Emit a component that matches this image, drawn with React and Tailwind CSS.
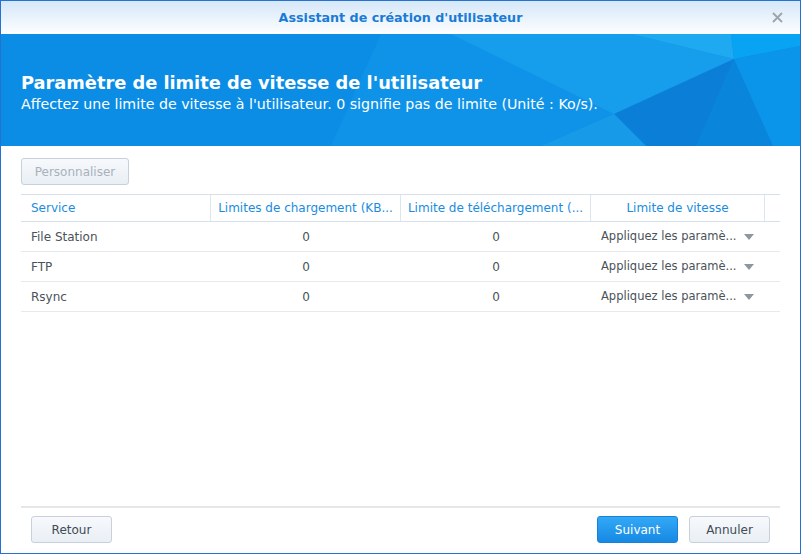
// dialog colours
// border  #2473d0
// banner  #0b8de6
// header  #1a8ce0

const rows = [
  { name: "File Station", up: 0, down: 0 },
  { name: "FTP", up: 0, down: 0 },
  { name: "Rsync", up: 0, down: 0 },
];

function Facets() {
  return (
    <svg
      className="absolute inset-0 h-full w-full"
      viewBox="0 0 799 112"
      preserveAspectRatio="none"
    >
      <polygon points="380,0 630,0 733,25 613,80 540,112 330,112" fill="#0f93e8" />
      <polygon points="450,0 630,0 733,25 613,80" fill="#169deb" />
      <polygon points="630,0 730,0 733,25" fill="#1ea9f0" />
      <polygon points="730,0 799,0 799,12 733,25" fill="#09a3f3" />
      <polygon points="733,25 799,12 799,112 772,112" fill="#0b95ea" />
      <polygon points="733,25 772,112 695,112" fill="#0a85dc" />
      <polygon points="733,25 695,112 645,112 613,80" fill="#0b7fd8" />
      <polygon points="613,80 645,112 540,112" fill="#179be9" />
    </svg>
  );
}

function Button({ children, primary, disabled, className = "" }) {
  const base = primary
    ? "bg-gradient-to-b from-[#33a8f6] to-[#1589e4] border-[#1a82d6] text-white"
    : "bg-gradient-to-b from-[#f7f9fc] to-[#e9eff5] border-[#c6d1dc]";
  const text = primary ? "" : disabled ? "text-[#a9b2bb]" : "text-[#414b55]";
  return (
    <button
      className={`h-[27px] rounded-[3px] border text-[12px] ${base} ${text} ${className}`}
    >
      {children}
    </button>
  );
}

function App() {
  return (
    <div
      className="flex h-[554px] w-[801px] flex-col overflow-hidden border border-[#2473d0] bg-white"
      style={{ fontFamily: '"DejaVu Sans", Verdana, sans-serif' }}
    >
      {/* title bar */}
      <div className="relative flex h-[33px] shrink-0 items-center justify-center bg-gradient-to-b from-[#d5e7f8] to-[#fdfeff]">
        <span className="text-[12.7px] font-bold text-[#1a7bd6]">
          Assistant de création d'utilisateur
        </span>
        <svg
          className="absolute right-[17px] top-[11px]"
          width="11"
          height="11"
          viewBox="0 0 11 11"
        >
          <path d="M1 1 L10 10 M10 1 L1 10" stroke="#9ea4aa" strokeWidth="1.8" />
        </svg>
      </div>

      {/* banner */}
      <div className="relative h-[112px] shrink-0 bg-[#0b8de6]">
        <Facets />
        <div className="relative px-5 pt-[37px] text-white">
          <div className="text-[17.8px] font-bold leading-[24px]">
            Paramètre de limite de vitesse de l'utilisateur
          </div>
          <div className="text-[14.2px] leading-[18px]">
            Affectez une limite de vitesse à l'utilisateur. 0 signifie pas de limite (Unité : Ko/s).
          </div>
        </div>
      </div>

      {/* body */}
      <div className="flex flex-1 flex-col px-5">
        <div className="mt-3">
          <Button disabled className="w-[108px]">
            Personnaliser
          </Button>
        </div>

        <div className="mt-[9px] text-[12px]">
          <div className="grid h-[28px] grid-cols-[190px_190px_190px_174px_15px] border-y border-[#d7e0ea] text-[#1a8ce0]">
            <div className="flex items-center border-r border-[#dde6ef] px-[10px]">Service</div>
            <div className="flex items-center justify-center truncate border-r border-[#dde6ef] px-2">
              Limites de chargement (KB...
            </div>
            <div className="flex items-center justify-center truncate border-r border-[#dde6ef] px-2">
              Limite de téléchargement (...
            </div>
            <div className="flex items-center justify-center border-r border-[#dde6ef]">
              Limite de vitesse
            </div>
            <div />
          </div>
          {rows.map((r) => (
            <div
              key={r.name}
              className="grid h-[30px] grid-cols-[190px_190px_190px_174px_15px] border-b border-[#e6e9ed] text-[#4a525a]"
            >
              <div className="flex items-center px-[10px]">{r.name}</div>
              <div className="flex items-center justify-center">{r.up}</div>
              <div className="flex items-center justify-center">{r.down}</div>
              <div className="flex items-center pl-[10px]">
                <span className="whitespace-nowrap text-[11.5px]">Appliquez les paramè...</span>
                <svg width="10" height="6" viewBox="0 0 10 6" className="ml-[7px] shrink-0">
                  <polygon points="0,0 10,0 5,6" fill="#8e979f" />
                </svg>
              </div>
              <div />
            </div>
          ))}
        </div>

        <div className="flex-1" />

        {/* footer */}
        <div className="border-t-2 border-[#e4e6e8]" />
        <div className="flex h-[45px] items-start justify-between px-[10px] pt-[8px]">
          <Button className="w-[81px]">Retour</Button>
          <div className="flex gap-[11px]">
            <Button primary className="w-[81px]">
              Suivant
            </Button>
            <Button className="w-[81px]">Annuler</Button>
          </div>
        </div>
      </div>
    </div>
  );
}

export default App;
